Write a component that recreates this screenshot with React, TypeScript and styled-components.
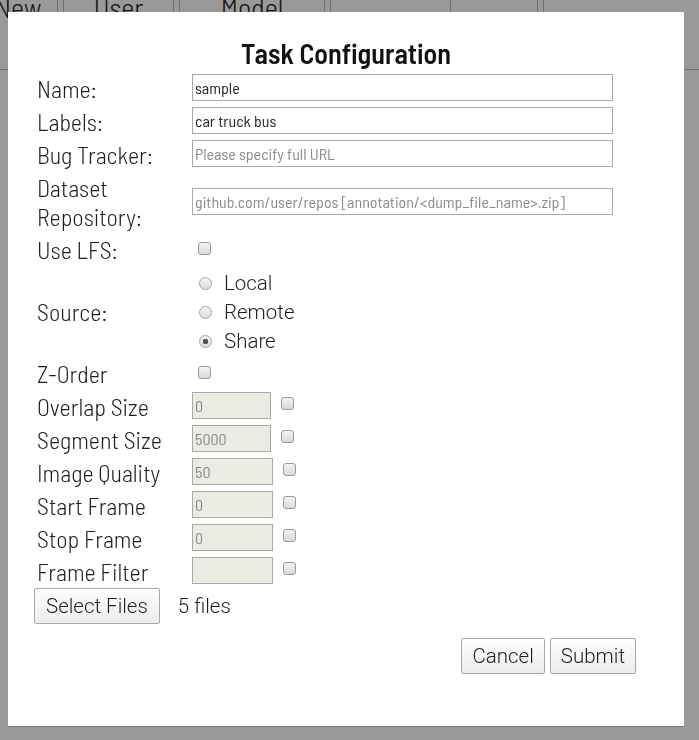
import React from "react";
import styled, { createGlobalStyle } from "styled-components";

const GlobalStyle = createGlobalStyle`
  html, body { margin: 0; padding: 0; }
  body {
    background: #ffffff;
    font-family: "Barlow Semi Condensed", "Roboto", sans-serif;
    color: #222;
    overflow: hidden;
  }
`;

const Page = styled.div`
  position: relative;
  width: 100%;
  height: 100vh;
  overflow: hidden;
`;

const NavBar = styled.nav`
  display: flex;
  gap: 5px;
  height: 79px;
  margin: -9px 0 0 -22px;
  border-bottom: 1px solid #b9b9b9;
  box-sizing: border-box;
`;

const NavItem = styled.div<{ $w: number; $noLeft?: boolean }>`
  flex: 0 0 ${(p) => p.$w}px;
  box-sizing: border-box;
  border: 1px solid #b9b9b9;
  border-left-width: ${(p) => (p.$noLeft ? 0 : 1)}px;
  border-top: 0;
  border-bottom: 0;
  font-size: 28px;
  font-weight: 300;
  line-height: 33px;
  color: #222;
  text-align: center;
  white-space: nowrap;
`;

const Overlay = styled.div`
  position: fixed;
  inset: 0;
  background: rgba(0, 0, 0, 0.4);
`;

const Modal = styled.div`
  position: fixed;
  left: 8px;
  top: 12px;
  width: 676px;
  height: 714px;
  box-sizing: border-box;
  padding: 25px 26px 0 26px;
  background: #fff;
  box-shadow: 0 1px 0 rgba(0, 0, 0, 0.18);
`;

const Title = styled.h2`
  margin: 0;
  text-align: center;
  font-size: 28px;
  font-weight: 600;
  line-height: 33px;
  color: #111;
`;

const FormTable = styled.table`
  border-spacing: 2px;
  border-collapse: separate;
  margin: 0;
`;

const LabelCell = styled.td`
  width: 151px;
  padding: 2px 1px 0 1px;
  font-size: 24px;
  font-weight: 300;
  line-height: 29px;
  vertical-align: middle;
  color: #1e1e1e;
`;

const FieldCell = styled.td`
  padding: 1px;
  vertical-align: middle;
`;

const TextInput = styled.input`
  display: block;
  width: 421px;
  height: 27px;
  box-sizing: border-box;
  margin: 0;
  padding: 1px 2px;
  border: 1px solid #a9a9a9;
  border-radius: 0;
  font-family: "Barlow Semi Condensed", sans-serif;
  font-size: 16px;
  color: #222;
  background: #fff;
  outline: none;
  &::placeholder {
    color: #8a8a8a;
  }
`;

const NumberInput = styled.input<{ $w: number }>`
  display: block;
  width: ${(p) => p.$w}px;
  height: 27px;
  box-sizing: border-box;
  margin: 0;
  padding: 1px 2px;
  border: 1px solid #a9a9a9;
  border-radius: 0;
  font-family: "Barlow Semi Condensed", sans-serif;
  font-size: 16px;
  color: #8a8a8a;
  background: #ebebe4;
  outline: none;
`;

const Check = styled.input.attrs({ type: "checkbox" })<{ $inline?: boolean }>`
  appearance: none;
  display: block;
  width: 13px;
  height: 13px;
  box-sizing: border-box;
  margin: ${(p) => (p.$inline ? "5px 0 0 0" : "0 0 0 6px")};
  border: 1px solid #9a9a9a;
  border-radius: 3px;
  background: linear-gradient(#f4f4f4, #d9d9d9);
`;

const FieldRow = styled.div`
  display: flex;
  align-items: flex-start;
  gap: 10px;
`;

const RadioList = styled.div`
  display: flex;
  flex-direction: column;
  padding-left: 7px;
`;

const RadioLabel = styled.label`
  display: flex;
  align-items: center;
  gap: 12px;
  height: 29px;
  padding-top: 3px;
  box-sizing: border-box;
  font-family: "Roboto", sans-serif;
  font-size: 20.5px;
  font-weight: 300;
  color: #1e1e1e;
`;

const Radio = styled.input.attrs({ type: "radio", name: "source" })`
  appearance: none;
  width: 13px;
  height: 13px;
  box-sizing: border-box;
  margin: 0;
  border: 1px solid #a5a5a5;
  border-radius: 50%;
  background: linear-gradient(#f6f6f6, #dcdcdc);
  &:checked {
    background: radial-gradient(circle, #555 0 2.5px, transparent 3px),
      linear-gradient(#f6f6f6, #dcdcdc);
  }
`;

const FilesRow = styled.div`
  display: flex;
  align-items: center;
  gap: 18px;
`;

const Button = styled.button<{ $padX?: number }>`
  margin: 0;
  padding: 6px ${(p) => p.$padX ?? 10}px;
  border: 1px solid #a9a9a9;
  border-radius: 2px;
  background: linear-gradient(#fdfdfd, #ececec);
  font-family: "Roboto", sans-serif;
  font-size: 20.5px;
  font-weight: 300;
  line-height: 22px;
  color: #1e1e1e;
`;

const FilesCount = styled.span`
  font-family: "Roboto", sans-serif;
  font-size: 20.5px;
  font-weight: 300;
  color: #1e1e1e;
`;

const Actions = styled.div`
  display: flex;
  justify-content: flex-end;
  gap: 5px;
  margin-top: 14px;
  padding-right: 22px;
`;

const numberFields: { label: string; value: string; w: number }[] = [
  { label: "Overlap Size", value: "0", w: 79 },
  { label: "Segment Size", value: "5000", w: 79 },
  { label: "Image Quality", value: "50", w: 81 },
  { label: "Start Frame", value: "0", w: 81 },
  { label: "Stop Frame", value: "0", w: 81 },
  { label: "Frame Filter", value: "", w: 81 },
];

const navItems = [
  { text: "New", w: 80 },
  { text: "User", w: 111 },
  { text: "Model", w: 146 },
  { text: "", w: 121 },
  { text: "", w: 82, noLeft: true },
  { text: "", w: 200 },
];

export default function App() {
  return (
    <>
      <GlobalStyle />
      <Page>
        <NavBar>
          {navItems.map((n, i) => (
            <NavItem key={i} $w={n.w} $noLeft={n.noLeft}>
              {n.text}
            </NavItem>
          ))}
        </NavBar>
        <Overlay />
        <Modal>
          <Title>Task Configuration</Title>
          <FormTable>
            <tbody>
              <tr>
                <LabelCell>Name:</LabelCell>
                <FieldCell>
                  <TextInput defaultValue="sample" />
                </FieldCell>
              </tr>
              <tr>
                <LabelCell>Labels:</LabelCell>
                <FieldCell>
                  <TextInput defaultValue="car truck bus" />
                </FieldCell>
              </tr>
              <tr>
                <LabelCell>Bug Tracker:</LabelCell>
                <FieldCell>
                  <TextInput placeholder="Please specify full URL" />
                </FieldCell>
              </tr>
              <tr>
                <LabelCell>Dataset Repository:</LabelCell>
                <FieldCell>
                  <TextInput placeholder="github.com/user/repos [annotation/<dump_file_name>.zip]" />
                </FieldCell>
              </tr>
              <tr>
                <LabelCell>Use LFS:</LabelCell>
                <FieldCell>
                  <Check />
                </FieldCell>
              </tr>
              <tr>
                <LabelCell>Source:</LabelCell>
                <FieldCell>
                  <RadioList>
                    <RadioLabel>
                      <Radio value="local" />
                      Local
                    </RadioLabel>
                    <RadioLabel>
                      <Radio value="remote" />
                      Remote
                    </RadioLabel>
                    <RadioLabel>
                      <Radio value="share" defaultChecked />
                      Share
                    </RadioLabel>
                  </RadioList>
                </FieldCell>
              </tr>
              <tr>
                <LabelCell>Z-Order</LabelCell>
                <FieldCell>
                  <Check />
                </FieldCell>
              </tr>
              {numberFields.map((f) => (
                <tr key={f.label}>
                  <LabelCell>{f.label}</LabelCell>
                  <FieldCell>
                    <FieldRow>
                      <NumberInput $w={f.w} defaultValue={f.value} disabled />
                      <Check $inline />
                    </FieldRow>
                  </FieldCell>
                </tr>
              ))}
            </tbody>
          </FormTable>
          <FilesRow>
            <Button $padX={11}>Select Files</Button>
            <FilesCount>5 files</FilesCount>
          </FilesRow>
          <Actions>
            <Button>Cancel</Button>
            <Button>Submit</Button>
          </Actions>
        </Modal>
      </Page>
    </>
  );
}
